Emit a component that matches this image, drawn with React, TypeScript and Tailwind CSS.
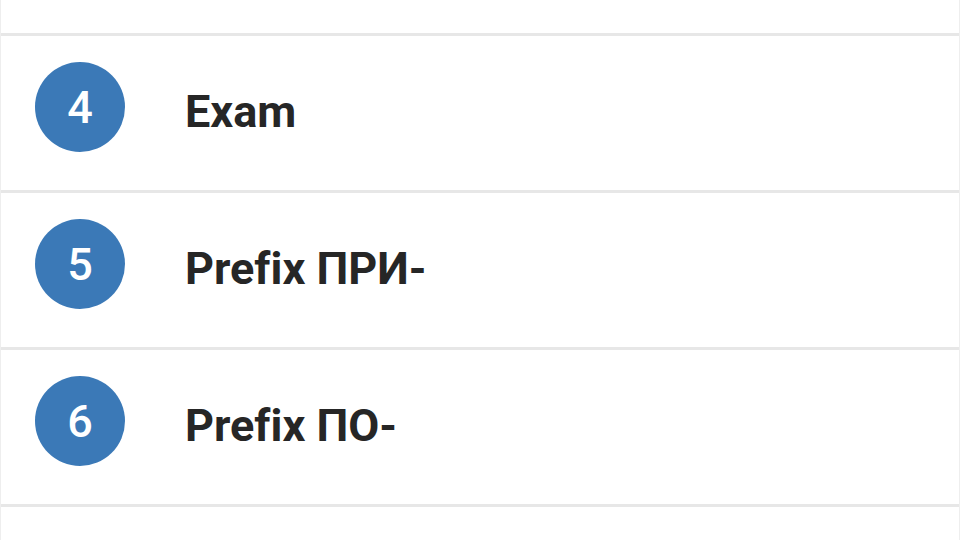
const lessons = [
  { num: 4, title: 'Exam' },
  { num: 5, title: 'Prefix ПРИ-' },
  { num: 6, title: 'Prefix ПО-' },
];

const LessonRow = ({ num, title }: { num: number; title: string }) => (
  <div className="h-[157px] border-b-[3px] border-[#e7e7e7] flex items-start pt-[26px] pl-[34px]">
    <div className="w-[90px] h-[90px] rounded-full bg-[#3b79b7] flex items-center justify-center shrink-0">
      <span className="text-white text-[45px] font-medium leading-none">{num}</span>
    </div>
    <div className="h-[90px] flex items-center ml-[60px] pt-[8px]">
      <span className="text-[#262626] text-[45px] font-bold leading-none [font-variant-ligatures:none]">
        {title}
      </span>
    </div>
  </div>
);

export default function App() {
  return (
    <div
      className="w-[960px] h-[540px] bg-white overflow-hidden border-x border-[#eeeeee]"
      style={{ fontFamily: 'Roboto, "Noto Sans", sans-serif' }}
    >
      <div className="h-[36px] border-b-[3px] border-[#e7e7e7]" />
      {lessons.map((l) => (
        <LessonRow key={l.num} num={l.num} title={l.title} />
      ))}
    </div>
  );
}
